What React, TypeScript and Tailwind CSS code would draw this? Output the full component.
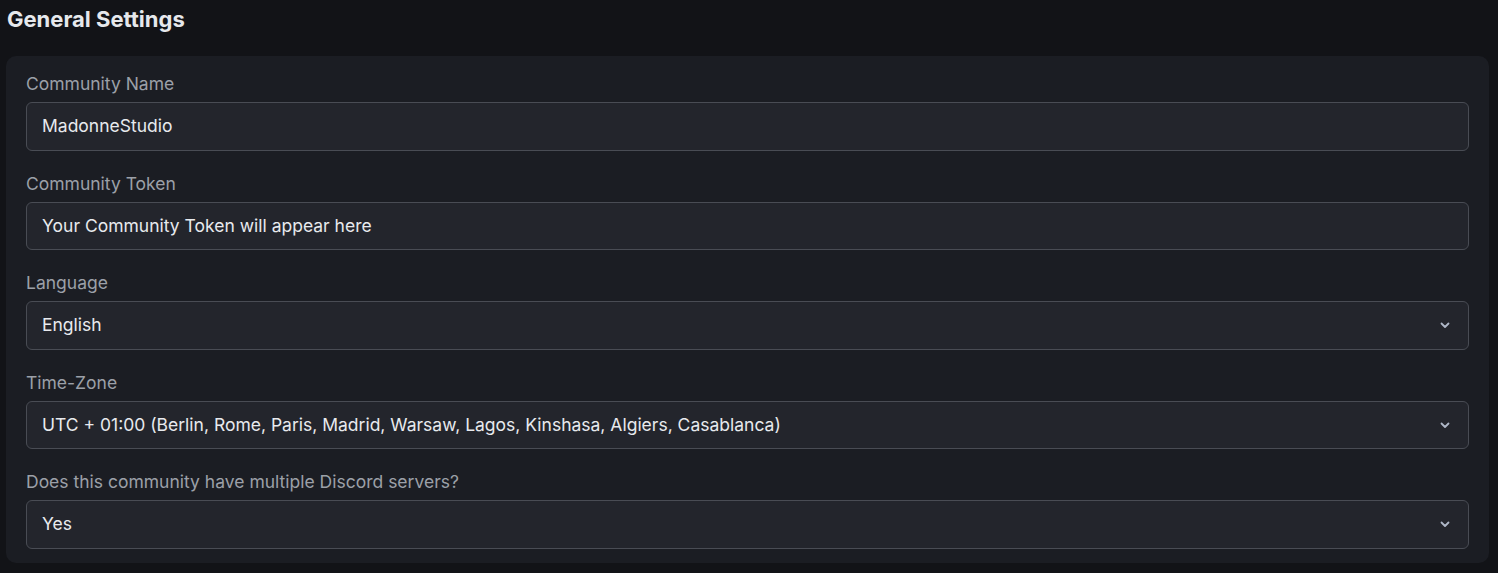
import React from "react";

function Chevron() {
  return (
    <svg width="12" height="12" viewBox="0 0 12 12" fill="none" className="text-[#aeb7c7]">
      <path d="M2.5 4.5L6 8L9.5 4.5" stroke="currentColor" strokeWidth="1.8" strokeLinecap="round" strokeLinejoin="round" />
    </svg>
  );
}

function Field({ label, value, select }: { label: string; value: string; select?: boolean }) {
  return (
    <div className="flex flex-col">
      <div className="text-[17.5px] leading-6 text-[#9ca0a8]">{label}</div>
      <div className="mt-[6px] flex h-[48.5px] items-center justify-between rounded-[6px] border border-[#494c54] bg-[#23252c] pl-[15px] pr-[17px] text-[17.5px] text-[#e8eaee]">
        <span>{value}</span>
        {select && <Chevron />}
      </div>
    </div>
  );
}

export default function App() {
  return (
    <div className="min-h-[573px] w-full bg-[#121317] font-['Inter',sans-serif]">
      <div className="pl-[7px] pt-[5px] text-[22px] font-bold leading-7 text-[#e6e8ec]">General Settings</div>
      <div className="ml-[6px] mr-[9px] mt-[23px] flex flex-col gap-[21px] rounded-[10px] bg-[#1b1d23] px-[20px] pb-[14px] pt-[16px]">
        <Field label="Community Name" value="MadonneStudio" />
        <Field label="Community Token" value="Your Community Token will appear here" />
        <Field label="Language" value="English" select />
        <Field label="Time-Zone" value="UTC + 01:00 (Berlin, Rome, Paris, Madrid, Warsaw, Lagos, Kinshasa, Algiers, Casablanca)" select />
        <Field label="Does this community have multiple Discord servers?" value="Yes" select />
      </div>
    </div>
  );
}
